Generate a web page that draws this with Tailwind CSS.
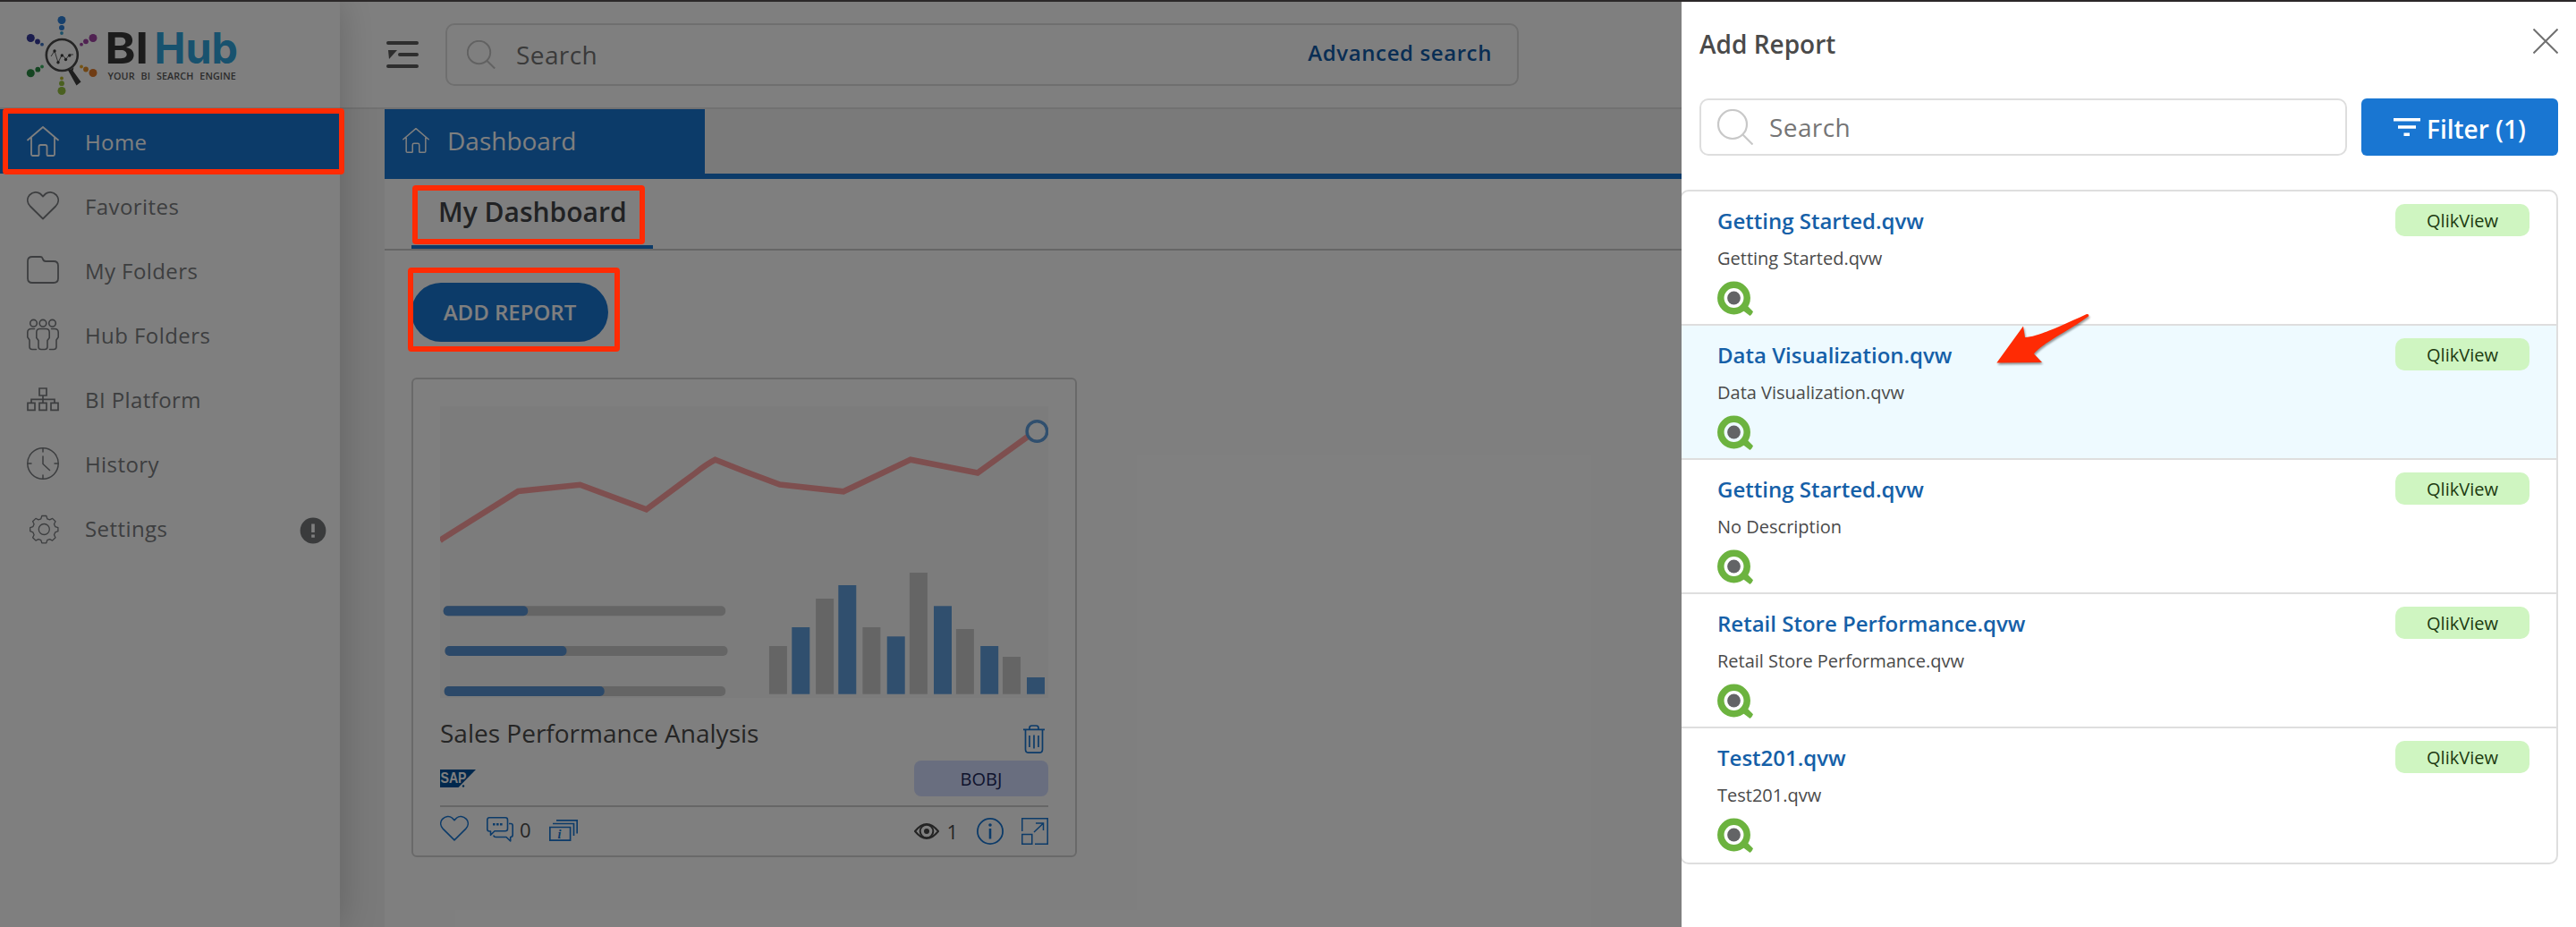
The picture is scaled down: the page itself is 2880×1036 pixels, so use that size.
<!DOCTYPE html>
<html lang="en">
<head>
<meta charset="utf-8">
<title>BI Hub</title>
<script src="https://cdn.jsdelivr.net/npm/@tailwindcss/browser@4"></script>
</head>
<body class="relative h-[1036px] w-[2880px] overflow-hidden bg-[#f4f4f4] font-['Open_Sans',sans-serif]">

<svg class="hidden">
  <symbol id="home" viewBox="0 0 36 36" fill="none" stroke="currentColor" stroke-width="1.8" stroke-linecap="round" stroke-linejoin="round">
    <path d="M1 16.5 18 2l17 14.5M5 14v18.5q0 1.500 1.500 1.500h6q1 0 1-1V24q0-2 2-2h5q2 0 2 2v9q0 1 1 1h6q1.500 0 1.500-1.500V14"/>
  </symbol>
  <symbol id="heart" viewBox="0 0 36 36" fill="none" stroke="currentColor" stroke-width="1.8" stroke-linejoin="round">
    <path d="M18 32.500 3.800 18.500C0 14.500 0 9.500 3 6c4-4 9-4 12 -1.500L18 7.500l3-3C24 2 29 2 33 6c3 3.500 3 8.500-.8 12.500z"/>
  </symbol>
  <symbol id="qlik" viewBox="0 0 40 40">
    <path d="m26 31 5.500-5.500L40 34.200q-1 3-3.500 4.800z" fill="#6cb33f"/>
    <circle cx="18.500" cy="19" r="14.700" fill="none" stroke="#6cb33f" stroke-width="7.500"/>
    <circle cx="18.500" cy="19" r="7.400" fill="#636466"/>
  </symbol>
</svg>

<div class="relative z-30 h-0.5 bg-[#2b2829]"></div>

<div class="flex h-[1034px]">
  <!-- Sidebar -->
  <aside class="relative z-10 flex w-[380px] shrink-0 flex-col bg-white shadow-[0_0_40px_rgba(0,0,0,0.2)]">
    <div class="flex h-[120px] items-start border-b-2 border-[#e2e2e2] pl-7 pt-3">
      <svg class="h-[100px] w-[240px]" viewBox="28 14 240 100">
        <g fill="#2e80d8"><circle cx="69" cy="22.500" r="4.500"/><circle cx="69" cy="31" r="3"/><circle cx="69" cy="37" r="1.900" fill="#38a0d0"/></g>
        <g fill="#363a9c"><circle cx="34.300" cy="42.500" r="4.500"/><circle cx="42" cy="46.500" r="2.900"/><circle cx="47" cy="49.700" r="1.900" fill="#3a70c0"/></g>
        <g fill="#a044a4"><circle cx="104" cy="42.500" r="4.500"/><circle cx="96" cy="46.300" r="2.900"/><circle cx="91" cy="49.700" r="1.900"/></g>
        <g fill="#2a8a44"><circle cx="34.300" cy="81.700" r="4.500"/><circle cx="42.300" cy="77.700" r="2.900"/><circle cx="47" cy="74.500" r="1.900" fill="#38b060"/></g>
        <g fill="#e07828"><circle cx="104" cy="81.500" r="4.500"/><circle cx="96" cy="77.500" r="2.900" fill="#e08c28"/><circle cx="91" cy="74.500" r="1.900" fill="#e8a828"/></g>
        <g fill="#94c040"><circle cx="69" cy="101.500" r="4.500"/><circle cx="69" cy="93.200" r="2.900"/><circle cx="69" cy="87.500" r="1.900" fill="#b8b828"/></g>
        <circle cx="69.300" cy="61.500" r="17.500" fill="none" stroke="#4a4a4a" stroke-width="2.600"/>
        <path d="M75.500 77.500 79 77.800l3.500-2.500L81.500 79l9 12.500-5 4L78 82z" fill="#3c3c3c"/>
        <path d="m57 63 4-6 4 13 4.300-9 4.500 5 4-5H82" fill="none" stroke="#4a4a4a" stroke-width=".9"/>
        <g fill="#3a3a3a"><circle cx="61" cy="57" r="1.700"/><circle cx="65" cy="69.800" r="1.700"/><circle cx="69.300" cy="62" r="1.700"/><circle cx="73.500" cy="66.500" r="1.700"/><circle cx="77.800" cy="62" r="1.700"/></g>
        <text x="117.500" y="71" font-family="Inter" font-weight="700" font-size="48" textLength="48.500" lengthAdjust="spacingAndGlyphs" fill="#383838">BI</text>
        <text x="172.500" y="71" font-family="Inter" font-weight="700" font-size="48" textLength="93.500" lengthAdjust="spacingAndGlyphs" fill="#30a4dc">Hub</text>
        <text x="120.500" y="88.700" font-family="Open Sans" font-weight="600" font-size="10.800" letter-spacing="0.7" word-spacing="4" textLength="144" fill="#585858">YOUR BI SEARCH ENGINE</text>
      </svg>
    </div>
    <nav class="text-2xl tracking-[0.42px] text-[#7a7d80] *:flex *:h-[72px] *:items-center *:gap-[29px] *:pl-[30px]">
      <a class="bg-[#1976d2] text-white"><svg class="size-9"><use href="#home"/></svg><span class="pt-0.5">Home</span></a>
      <a><svg class="size-9"><use href="#heart"/></svg><span class="pt-0.5">Favorites</span></a>
      <a><svg class="size-9" viewBox="0 0 36 36" fill="none" stroke="currentColor" stroke-width="1.800" stroke-linejoin="round"><path d="M1 8q0-5 5-5h9q2 0 2.500 1.500Q18.300 8 21 8h9q5 0 5 5v14q0 5-5 5H6q-5 0-5-5z"/></svg><span class="pt-0.5">My Folders</span></a>
      <a><svg class="size-9" viewBox="0 0 36 36" fill="none" stroke="currentColor" stroke-width="1.600" stroke-linecap="round" stroke-linejoin="round"><circle cx="7.500" cy="5.200" r="3.800"/><circle cx="18" cy="5.200" r="3.800"/><circle cx="28.500" cy="5.200" r="3.800"/><path d="M14.500 11.500h7q3.700 0 3.700 4v6l-2.200 3v7q0 3-3 3h-4q-3 0-3-3v-7l-2.200-3v-6q0-4 3.700-4zM8.500 11.500H5q-4.200 0-4.200 4v5.300L3 24v7.500q0 3 3 3h4.500M27.500 11.500H31q4.200 0 4.200 4v5.300L33 24v7.500q0 3-3 3h-4.500"/></svg><span class="pt-0.5">Hub Folders</span></a>
      <a><svg class="size-9" viewBox="0 0 36 36" fill="none" stroke="currentColor" stroke-width="1.700"><path d="M14 6h8v8h-8zM1 22.300h8v8H1zM14 22.300h8v8h-8zM27 22.300h8v8h-8zM18 14v8M5 22v-3.700h26V22"/></svg><span class="pt-0.5">BI Platform</span></a>
      <a><svg class="size-9" viewBox="0 0 36 36" fill="none" stroke="currentColor" stroke-width="1.500" stroke-linecap="round"><circle cx="18" cy="18" r="17.200"/><path d="M18 1v4M18 31v4M1 18h4M31 18h4M18 10v8.500l7.500 7"/></svg><span class="pt-0.5">History</span></a>
      <a class="pr-[15px]"><svg class="size-9" viewBox="0 0 36 36" fill="none" stroke="currentColor" stroke-width="1.300" stroke-linejoin="round"><circle cx="19.300" cy="19.500" r="6"/><path d="M16.800 4.500h5l1 3.300 2.800 1.100 3-1.500 3.400 3.300-1.500 3.100 1.200 2.800 3.200 1.100v4l-3.200 1.200-1.200 2.800 1.500 3.100-3.400 3.300-3-1.500-2.800 1.100-1 3.100h-5l-1-3.100-2.800-1.100-3 1.500-3.400-3.300 1.500-3.100-1.200-2.800-3.200-1.200v-4l3.200-1.100 1.200-2.800-1.500-3.100L10 7.400l3 1.500 2.800-1.100z"/></svg><span class="pt-0.5">Settings</span>
        <svg class="ml-auto mt-1.5 h-[30px] w-[30px]" viewBox="0 0 30 30"><circle cx="15" cy="15" r="14.400" fill="#747678"/><path d="M13.200 7.500h3.600V17h-3.600zM13.200 19.500h3.600v3.200h-3.600z" fill="#fff"/></svg></a>
    </nav>
  </aside>

  <!-- Main column -->
  <main class="flex flex-1 flex-col">
    <header class="flex h-[120px] items-center border-b-2 border-[#e2e2e2] bg-white pl-[52px]">
      <svg class="h-[30px] w-9" viewBox="0 0 36 30" fill="#5c5c5c"><rect width="36" height="4" rx="2"/><rect x="13" y="13" width="23" height="4" rx="2"/><rect y="26" width="36" height="4" rx="2"/><path d="M2 10h10L3 20z"/></svg>
      <div class="ml-[30px] flex h-[70px] w-[1200px] items-center rounded-[10px] border-2 border-[#dedede] pl-[22px] pr-7">
        <svg class="size-8" viewBox="0 0 32 32" fill="none" stroke="#c4c4c4" stroke-width="2"><circle cx="13.500" cy="13.500" r="12.700"/><path d="m22.500 23 8.700 8.500"/></svg>
        <span class="ml-[23px] text-[28px] tracking-[0.4px] text-[#757575]">Search</span>
        <a class="ml-auto pb-[5px] text-2xl font-semibold tracking-[0.6px] text-[#125ca8]">Advanced search</a>
      </div>
    </header>

    <section class="ml-[50px] flex flex-1 flex-col bg-white">
      <div class="flex h-[78px] border-b-6 border-[#1976d2] bg-[#f4f4f4]">
        <div class="flex w-[358px] items-center bg-[#1976d2] pb-0.5 pl-5 text-[28px] text-white">
          <svg class="size-[30px]"><use href="#home"/></svg><span class="ml-5">Dashboard</span>
        </div>
      </div>
      <div class="flex h-20 border-b-2 border-[#ccc] pl-[30px]">
        <div class="flex w-[270px] items-center border-b-4 border-[#1976d2] pb-0.5 pl-[30px] text-[30px] font-semibold text-[#424548]">My Dashboard</div>
      </div>
      <div class="flex flex-col items-start gap-10 px-[30px] pt-9">
        <button class="flex h-[66px] w-[220px] items-center justify-center rounded-full bg-[#1976d2] text-2xl font-semibold text-white">ADD REPORT</button>

        <!-- Report card -->
        <article class="flex h-[536px] w-[744px] flex-col rounded-md border-2 border-[#d2d2d2] px-[30px] pt-[30px]">
          <svg class="h-[326px] w-[680px] bg-[#f9f9f9]" viewBox="492 454 680 326">
            <path d="m492 604 3.200-2.300L579.300 549l69.200-7.300 74.100 27.600L777 529q14-11 22.700-15.200L833 527l38.800 14.500 71.200 7.800 75-35.600 75 14.800 58-42" fill="none" stroke="#fd9e9e" stroke-width="6.500"/>
            <circle cx="1159.400" cy="482" r="11.300" fill="#fff" stroke="#609edc" stroke-width="3.500"/>
            <g fill="#cacaca"><rect x="495.700" y="677.300" width="315.500" height="11" rx="5"/><rect x="497.500" y="722" width="316" height="11" rx="5"/><rect x="496.700" y="767" width="314.500" height="11" rx="5"/>
              <rect x="859.900" y="722" width="20" height="53.700"/><rect x="912.100" y="669" width="20" height="106.700"/><rect x="964.400" y="701" width="20" height="74.700"/><rect x="1016.900" y="640" width="20" height="135.700"/><rect x="1068.900" y="703" width="20" height="72.700"/><rect x="1121" y="734" width="20" height="41.700"/></g>
            <g fill="#5892d2"><rect x="495.700" y="677.300" width="94.500" height="11" rx="5"/><rect x="497.500" y="722" width="136" height="11" rx="5"/><rect x="496.700" y="767" width="179" height="11" rx="5"/></g>
            <g fill="#609edc"><rect x="885.300" y="701" width="20" height="74.700"/><rect x="937.300" y="654" width="20" height="121.700"/><rect x="991.700" y="711.300" width="20" height="64.400"/><rect x="1044" y="677.300" width="20" height="98.400"/><rect x="1096.200" y="722" width="20" height="53.700"/><rect x="1148" y="757" width="20" height="18.700"/></g>
          </svg>
          <div class="flex h-[70px] items-start justify-between pr-1">
            <h3 class="mt-5 text-[28px] leading-[38px] text-[#4a4a4a]">Sales Performance Analysis</h3>
            <svg class="mt-[30px] h-8 w-6" viewBox="0 0 24 32" fill="none" stroke="#1976d2" stroke-width="1.700"><path d="M0 5.300h24M2.500 6v21.500q0 3.700 3.700 3.700h11.600q3.700 0 3.700-3.700V6M7 5V3.500Q7 1 9.500 1h5Q17 1 17 3.500V5M7 12v13M12 11.500v15M17 12v13"/></svg>
          </div>
          <div class="flex h-10 items-center justify-between">
            <svg class="h-5 w-10" viewBox="0 0 40 20"><path d="M0 0h40L20.500 20H0z" fill="#00509a"/><text x=".5" y="15.300" font-family="Liberation Sans" font-weight="700" font-size="16.500" textLength="29" lengthAdjust="spacingAndGlyphs" fill="#fff">SAP</text><circle cx="26" cy="18.500" r="1.200" fill="#00509a"/></svg>
            <span class="flex h-10 w-[150px] items-center justify-center rounded-lg bg-[#d2dcff] pt-0.5 text-xl text-[#20285a]">BOBJ</span>
          </div>
          <div class="mt-2.5 flex h-14 items-start border-t-2 border-[#ccc] text-[22px] leading-[30px] text-[#4a4a4a]">
            <svg class="mt-2 size-8 text-[#1976d2]"><use href="#heart"/></svg>
            <svg class="ml-5 mt-[11px] h-7 w-[30px]" viewBox="0 0 30 28" fill="none" stroke="#1976d2" stroke-width="1.600" stroke-linejoin="round"><path d="M3 .8h18q2.500 0 2.500 2.500v10q0 2.500-2.500 2.500H9l-4.500 4.500V16H3Q.8 16 .8 13.500v-10Q.8.800 3 .8zM25 7.500h2q2.200 0 2.200 2.200V20q0 2.500-2.500 2.500V27L22 22.500H10.500Q8 22.500 8 20.500"/><path d="M7 8.300h2.600M11 8.300h2.600M15 8.300h2.600" stroke-width="2.600"/></svg>
            <span class="ml-[7px] mt-2.5">0</span>
            <svg class="ml-5 mt-3.5 h-6 w-8" viewBox="0 0 32 24" fill="none" stroke="#1976d2" stroke-width="1.700"><path d="M.8 8.500h22.800v14.600H.8zM4 4.500h23.500V18M8 .9h23.200v14.500"/><text x="9.500" y="20.500" font-family="Liberation Serif" font-style="italic" font-weight="700" font-size="14" fill="#1976d2" stroke="none">i</text></svg>
            <svg class="ml-auto mt-[18px] h-[18px] w-7" viewBox="0 0 28 18" fill="none" stroke="#484848" stroke-width="2"><path d="M1 9Q14-7 27 9 14 25 1 9z"/><circle cx="14" cy="9" r="7.300"/><circle cx="14" cy="9" r="3" fill="#484848" stroke="none"/></svg>
            <span class="ml-2 mt-3">1</span>
            <svg class="ml-[21px] mt-3 size-[30px]" viewBox="0 0 30 30" fill="none" stroke="#1976d2"><circle cx="15" cy="15" r="14.100" stroke-width="1.800"/><path d="M15 12v11.500" stroke-width="2.600"/><circle cx="15" cy="8" r="1.800" fill="#1976d2" stroke="none"/></svg>
            <svg class="ml-5 mt-3 size-[30px]" viewBox="0 0 30 30" fill="none" stroke="#1976d2" stroke-width="1.500"><path d="M.8 15V.8h28.400v28.400H15M.8 18.500h11v10.700H.8zM14 16 24.500 6M16 6h8.500v8"/></svg>
          </div>
        </article>
      </div>
    </section>
  </main>
</div>

<!-- Modal backdrop -->
<div class="absolute inset-x-0 bottom-0 top-0.5 z-20 bg-black/50"></div>

<!-- Add Report drawer -->
<div class="absolute bottom-0 right-0 top-0.5 z-20 w-[1000px] overflow-hidden bg-white">
  <div class="flex h-[108px] items-start justify-between px-5">
    <h2 class="mt-7 text-[28px] font-semibold leading-[38px] text-[#4a4a4a]">Add Report</h2>
    <svg class="mt-[30px] size-7" viewBox="0 0 28 28" stroke="#707070" stroke-width="2"><path d="m.5.5 27 27M27.500.5l-27 27"/></svg>
  </div>
  <div class="flex h-16 gap-4 px-5">
    <div class="flex flex-1 items-center rounded-[10px] border-2 border-[#dedede] pl-[18px]">
      <svg class="h-10 w-10" viewBox="0 0 40 40" fill="none" stroke="#c8c8c8" stroke-width="2.200"><circle cx="17" cy="17" r="16"/><path d="m28.500 28.500 11 11"/></svg>
      <span class="ml-[18px] pb-px text-[28px] tracking-[0.4px] text-[#757575]">Search</span>
    </div>
    <button class="flex w-[220px] items-center rounded-md bg-[#1976d2] pl-9 text-[28px] font-semibold text-white">
      <svg class="h-5 w-[30px]" viewBox="0 0 30 20" fill="#fff"><path d="M0 0h30v3.500H0zM5 8.300h20v3.500H5zM11.500 16.500h6.500v3.500h-6.500z"/></svg>
      <span class="ml-[7px] pt-[3px]">Filter (1)</span>
    </button>
  </div>
  <ul id="reports" class="-ml-0.5 mr-5 mt-[38px] h-[754px] overflow-hidden rounded-[10px] border-2 border-[#dedede]"></ul>
</div>

<template id="report">
  <li class="flex h-[150px] items-start justify-between border-b-2 border-[#dedede] pl-10 pr-[30px] pt-3.5 last:border-b-0">
    <div>
      <h4 class="mt-px text-2xl font-semibold leading-9 text-[#1560a8]"></h4>
      <p class="mt-2.5 text-xl leading-7 text-[#4a4a4a]"></p>
      <svg class="mt-[11px] size-10"><use href="#qlik"/></svg>
    </div>
    <span class="flex h-9 w-[150px] items-center justify-center rounded-[10px] bg-[#cff5c1] pt-0.5 text-xl text-[#1c3a10]">QlikView</span>
  </li>
</template>

<!-- Callouts -->
<div class="absolute left-[3px] top-[121px] z-40 h-[74px] w-[382px] rounded-[4px] border-6 border-[#ff2b04]"></div>
<div class="absolute left-[461px] top-[207px] z-40 h-[66px] w-[260px] rounded-[4px] border-6 border-[#ff2b04]"></div>
<div class="absolute left-[456px] top-[299px] z-40 h-[94px] w-[237px] rounded-[4px] border-6 border-[#ff2b04]"></div>
<svg class="absolute left-[2220px] top-[340px] z-40 h-20 w-[130px] drop-shadow-[1px_2px_1px_rgba(0,0,0,0.4)]" viewBox="2220 340 130 80"><path d="M2232.300 405.500 2262 364.500l2 12.500c14-.5 36-11 69-26q3 0 2 2.500c-20 15-52 30-61 42l9 9.500z" fill="#ff2b04"/></svg>

<script>
const rows = [
  ["Getting Started.qvw", "Getting Started.qvw"],
  ["Data Visualization.qvw", "Data Visualization.qvw"],
  ["Getting Started.qvw", "No Description"],
  ["Retail Store Performance.qvw", "Retail Store Performance.qvw"],
  ["Test201.qvw", "Test201.qvw"]
];
const list = document.getElementById("reports");
rows.forEach(([title, desc], i) => {
  const node = document.getElementById("report").content.cloneNode(true);
  node.querySelector("h4").textContent = title;
  node.querySelector("p").textContent = desc;
  if (i === 1) node.querySelector("li").style.backgroundColor = "#eefaff";
  list.append(node);
});
</script>
</body>
</html>
